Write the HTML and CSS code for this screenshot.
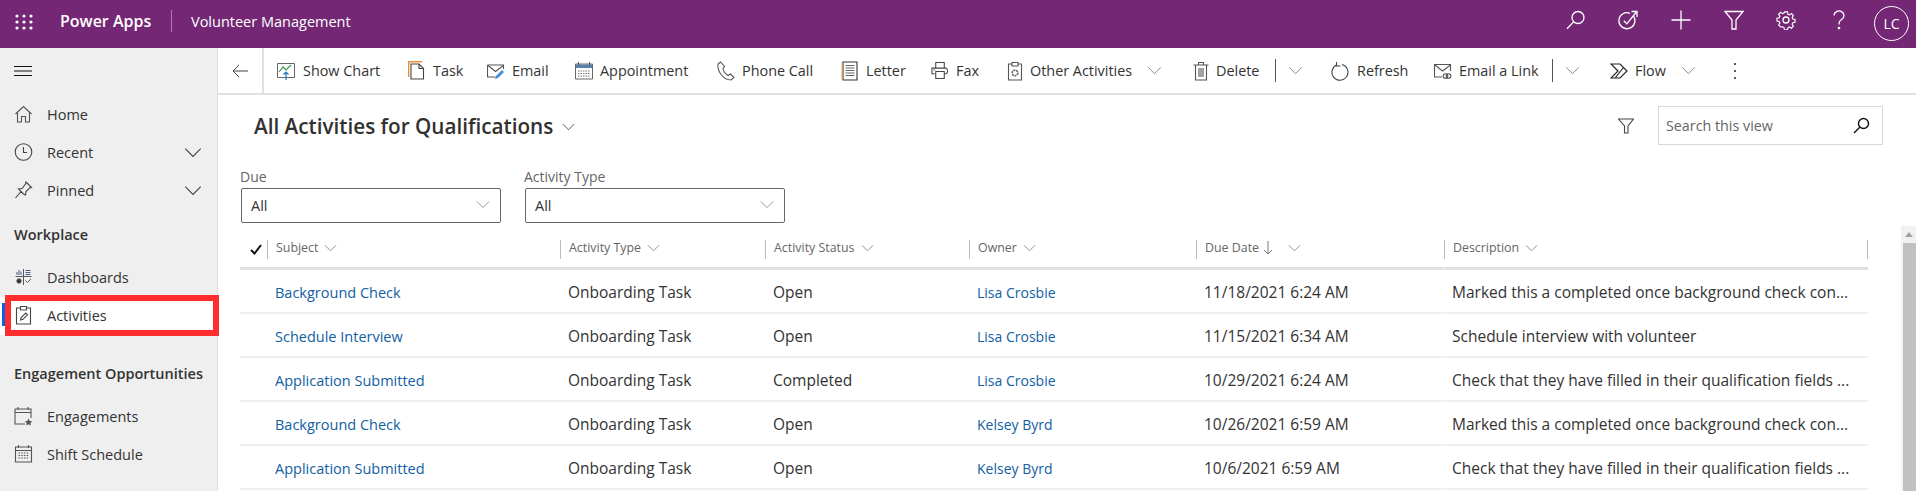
FILE: index.html
```html
<!DOCTYPE html>
<html lang="en">
<head>
    <meta charset="UTF-8">
    <meta name="viewport" content="width=device-width, initial-scale=1.0">
    <title>Volunteer Management</title>
    <link rel="stylesheet" href="styles.css">
</head>
<body>
    <svg class="defs" width="0" height="0">
        <symbol id="chev" viewBox="0 0 16 10"><path d="M1 1.5l7 7 7-7" fill="none" stroke="currentColor" stroke-width="1"/></symbol>
    </svg>

    <header class="topbar">
        <svg class="waffle" width="18" height="16" viewBox="0 0 18 16" fill="#fff">
            <circle cx="2" cy="2" r="1.6"/><circle cx="9" cy="2" r="1.6"/><circle cx="16" cy="2" r="1.6"/>
            <circle cx="2" cy="8" r="1.6"/><circle cx="9" cy="8" r="1.6"/><circle cx="16" cy="8" r="1.6"/>
            <circle cx="2" cy="14" r="1.6"/><circle cx="9" cy="14" r="1.6"/><circle cx="16" cy="14" r="1.6"/>
        </svg>
        <span class="brand">Power Apps</span>
        <span class="app-name">Volunteer Management</span>
        <div class="top-actions">
            <span class="top-btn"><svg width="20" height="20" viewBox="0 0 20 20" fill="none" stroke="#fff" stroke-width="1.3"><circle cx="12" cy="7.5" r="6"/><path d="M7.6 11.9L1 18.8"/></svg></span>
            <span class="top-btn"><svg width="20" height="20" viewBox="0 0 20 20" fill="none" stroke="#fff" stroke-width="1.3"><path d="M15 5.5a8 8 0 1 1-3-2.2"/><path d="M5.8 10.8l3 3L18 2.5M13.5 1.5H19V7"/></svg></span>
            <span class="top-btn"><svg width="20" height="20" viewBox="0 0 20 20" fill="none" stroke="#fff" stroke-width="1.3"><path d="M0.5 10h19M10 0.5v19"/></svg></span>
            <span class="top-btn"><svg width="20" height="20" viewBox="0 0 20 20" fill="none" stroke="#fff" stroke-width="1.3"><path d="M1 1.5h18l-7 8.5v9H8v-9z"/></svg></span>
            <span class="top-btn"><svg width="20" height="20" viewBox="0 0 20 20" fill="none" stroke="#fff" stroke-width="1.3"><circle cx="10" cy="10" r="3"/><path d="M8.3 1h3.4l.5 2.6 1.6.7 2.2-1.5 2.2 2.4-1.4 2.1.7 1.6 2.5.5v3.2l-2.5.5-.7 1.6 1.4 2.1-2.2 2.4-2.2-1.5-1.6.7-.5 2.5H8.3l-.5-2.5-1.6-.7L4 17.8l-2.2-2.4 1.4-2.1-.7-1.6L0 11.2V8l2.5-.5.7-1.6-1.4-2.1L4 1.4l2.2 1.5 1.6-.7z" transform="translate(1 1) scale(.9)"/></svg></span>
            <span class="top-btn"><svg width="20" height="20" viewBox="0 0 20 20" fill="none" stroke="#fff" stroke-width="1.3"><path d="M5 5.5a5 4.6 0 1 1 7.6 4c-1.7 1.1-2.6 2-2.6 4v1"/><circle cx="10" cy="18" r=".7" fill="#fff"/></svg></span>
        </div>
        <span class="avatar">LC</span>
    </header>

    <div class="shell">
        <nav class="sidebar">
            <div class="burger"><svg width="18" height="12" viewBox="0 0 18 12" stroke="#111" stroke-width="1"><path d="M0 1.5h18M0 6h18M0 10.5h18"/></svg></div>
            <ul class="nav-list first">
                <li class="nav-item"><svg width="18" height="18" viewBox="0 0 18 18" fill="none" stroke="#555" stroke-width="1.1"><path d="M1 9l8-7.5L17 9M3 7.5V17h4v-5.500h4V17h4V7.5"/></svg>Home</li>
                <li class="nav-item"><svg width="18" height="18" viewBox="0 0 18 18" fill="none" stroke="#444" stroke-width="1.1"><circle cx="9" cy="9" r="8.3"/><path d="M9 4v5.5h3.5"/></svg>Recent<svg class="nav-chev"><use href="#chev"/></svg></li>
                <li class="nav-item"><svg width="18" height="18" viewBox="0 0 18 18" fill="none" stroke="#444" stroke-width="1.1"><path d="M11.5 1l5.500 5.500-2 .5-3.500 3.500-.5 3.500-2-1-5-5 3.500-.5L11 3zM6.500 10.500L1 17"/></svg>Pinned<svg class="nav-chev"><use href="#chev"/></svg></li>
            </ul>
            <h2 class="nav-heading workplace">Workplace</h2>
            <ul class="nav-list">
                <li class="nav-item"><svg width="18" height="18" viewBox="0 0 18 18" fill="none" stroke="#555" stroke-width="1"><path d="M9 1v16M1 8.5h16"/><path d="M2.5 7V4M4.500 7V2M6.500 7V3.500M11 2.500h5M11 4.500h5M11 6.500h5" stroke="#4a5a80"/><circle cx="4.5" cy="13" r="2.2" fill="#333"/><path d="M11 12.5l2 2 3.500-3.500"/></svg>Dashboards</li>
                <li class="nav-item active"><svg width="18" height="20" viewBox="0 0 18 20" fill="none" stroke="#444" stroke-width="1.1"><path d="M5.5 3H2v16h14V3h-3.500"/><path d="M6 1.5h6V5H6z"/><path d="M6 15l.7-2.500 4.500-4.500 1.800 1.800-4.500 4.500z"/></svg>Activities</li>
            </ul>
            <h2 class="nav-heading engage">Engagement Opportunities</h2>
            <ul class="nav-list">
                <li class="nav-item"><svg width="19" height="20" viewBox="0 0 19 20" fill="none" stroke="#555" stroke-width="1.1"><path d="M1 3h16v9M1 3v15h10M1 6.5h16M4 1v3M14 1v3"/><path d="M14.5 12.5l1.200 2.400 2.600.3-1.900 1.800.5 2.500-2.400-1.200-2.300 1.200.5-2.500-1.900-1.800 2.500-.3z" fill="#555" stroke="none"/></svg>Engagements</li>
                <li class="nav-item"><svg width="18" height="20" viewBox="0 0 18 20" fill="none" stroke="#555" stroke-width="1.1"><path d="M1 3h16v15H1zM1 6.5h16M4 1v3M14 1v3"/><path d="M4 9h10M4 11.5h10M4 14h10" stroke-dasharray="1.5 1.2"/></svg>Shift Schedule</li>
            </ul>
        </nav>

        <main class="main">
            <div class="toolbar">
                <div class="back"><svg width="16" height="14" viewBox="0 0 16 14" fill="none" stroke="#444" stroke-width="1"><path d="M16 7H1M7 1L1 7l6 6"/></svg></div>
                <div class="cmd first-cmd wide"><svg width="18" height="18" viewBox="0 0 18 18" fill="none"><path d="M.5 1.5h17v14H.5z" stroke="#666"/><path d="M2 10l4-5 3 3 5-5" stroke="#3a9a50" stroke-width="1.2"/><path d="M9 18v-8M6.5 12.5L9 10l2.500 2.500" stroke="#1a78c2" stroke-width="1.2"/></svg>Show Chart</div>
                <div class="cmd"><svg width="18" height="20" viewBox="0 0 18 20" fill="none"><path d="M.7 16V.7h13.500" stroke="#e8903c" stroke-width="1.4"/><path d="M3 3h8l4.500 4.500V18H3zM11 3v4.500h4.500" stroke="#444" stroke-width="1.1" fill="#fff"/></svg>Task</div>
                <div class="cmd"><svg width="18" height="18" viewBox="0 0 18 18" fill="none"><path d="M.5 3h16v4M.5 3v12h8" stroke="#555" stroke-width="1.1"/><path d="M1 3.5l7.500 6 8-6" stroke="#555" stroke-width="1.1"/><path d="M8 17l1-3 6-6 2 2-6 6z" fill="#3d8fd6"/></svg>Email</div>
                <div class="cmd"><svg width="18" height="20" viewBox="0 0 18 20" fill="none"><path d="M.5 3h17v15H.5z" stroke="#666"/><path d="M1 3.5h16V7H1z" fill="#5a7fa8"/><path d="M3.5 1v3M14.5 1v3" stroke="#555"/><path d="M3 10h12M3 12.5h12M3 15h12" stroke="#777" stroke-dasharray="1.5 1"/></svg>Appointment</div>
                <div class="cmd"><svg width="18" height="20" viewBox="0 0 18 20" fill="none" stroke="#555" stroke-width="1.1"><path d="M3.5 1L1 3c-.5 4 1 8 3.500 11s6 5 9.500 5l3-2.500-3.500-3.500-2.500 1.500C8.500 13 6.500 10 6 7.500L7.500 5.500z"/></svg>Phone Call</div>
                <div class="cmd"><svg width="17" height="20" viewBox="0 0 17 20" fill="none"><path d="M1.5 1h14v18h-14z" stroke="#333" stroke-width="1.1"/><path d="M.5 1v18" stroke="#e8a860"/><path d="M4 4.5h9M4 7h9M4 9.5h9M4 12h9M4 14.500h9" stroke="#666" stroke-width="1.1"/></svg>Letter</div>
                <div class="cmd"><svg width="19" height="19" viewBox="0 0 19 19" fill="none" stroke="#444" stroke-width="1.1"><path d="M5 7V1h9v6M4 13H1V7h15c2 1 2 5 0 6h-2M5 10.5h9V18H5z"/><path d="M2.5 9h2" stroke="#2d86d0"/></svg>Fax</div>
                <div class="cmd narrow"><svg width="15" height="20" viewBox="0 0 15 20" fill="none" stroke="#555" stroke-width="1.1"><path d="M4 3H1v16h13V3h-3M4.5 1.500h6V5h-6z"/><circle cx="7.5" cy="12" r="2.8" stroke-width="1.5" stroke-dasharray="2 .8"/></svg>Other Activities<svg class="chev"><use href="#chev"/></svg></div>
                <div class="cmd narrow"><svg width="15" height="20" viewBox="0 0 15 20" fill="none" stroke="#555" stroke-width="1.1"><path d="M0 4h15M5 4V1.5h5V4M2 4v15h11V4M5.500 7v9M7.500 7v9M9.500 7v9"/></svg>Delete</div>
                <div class="split"><svg class="chev"><use href="#chev"/></svg></div>
                <div class="cmd wide"><svg width="18" height="22" viewBox="0 0 18 22" fill="none" stroke="#444" stroke-width="1.1"><path d="M11 3.500a8 8 0 1 1-5 .3M5.500 1v4h4" transform="translate(0 1)"/></svg>Refresh</div>
                <div class="cmd"><svg width="18" height="18" viewBox="0 0 18 18" fill="none" stroke="#555" stroke-width="1.1"><path d="M8 15H.5V2.500h16V9"/><path d="M1 3l7.500 6 8-6"/><circle cx="11.5" cy="14" r="2.3"/><circle cx="14.5" cy="14" r="2.3"/></svg>Email a Link</div>
                <div class="split"><svg class="chev"><use href="#chev"/></svg></div>
                <div class="cmd"><svg width="18" height="16" viewBox="0 0 18 16" fill="none" stroke="#222" stroke-width="1.2"><path d="M1 1h9l7 7-7 7H1l7-7zM5.500 14.500L13.500 4.500"/></svg>Flow<svg class="chev"><use href="#chev"/></svg></div>
                <div class="more"><svg width="4" height="18" viewBox="0 0 4 18" fill="#333"><circle cx="2" cy="2" r="1.1"/><circle cx="2" cy="9" r="1.1"/><circle cx="2" cy="16" r="1.1"/></svg></div>
            </div>

            <div class="view-head">
                <h1 class="view-title">All Activities for Qualifications<svg class="title-chev"><use href="#chev"/></svg></h1>
                <svg class="view-filter" width="16" height="16" viewBox="0 0 16 16" fill="none" stroke="#444" stroke-width="1.1"><path d="M.5 1h15L10 8v7H6.500V8z"/></svg>
                <div class="search">
                    <span>Search this view</span>
                    <svg width="17" height="17" viewBox="0 0 17 17" fill="none" stroke="#111" stroke-width="1.4"><circle cx="10.5" cy="6.5" r="5"/><path d="M6.800 10.200L1 16"/></svg>
                </div>
            </div>

            <div class="filters">
                <div class="filter">
                    <label>Due</label>
                    <div class="select">All<svg class="chev"><use href="#chev"/></svg></div>
                </div>
                <div class="filter">
                    <label>Activity Type</label>
                    <div class="select">All<svg class="chev"><use href="#chev"/></svg></div>
                </div>
            </div>

            <div class="grid-wrap">
                <table class="grid">
                    <colgroup>
                        <col class="c-check"><col class="c-subject"><col class="c-type"><col class="c-status"><col class="c-owner"><col class="c-due"><col class="c-desc">
                    </colgroup>
                    <thead>
                        <tr>
                            <th class="check-cell"><svg width="12" height="11" viewBox="0 0 12 11" fill="none" stroke="#111" stroke-width="2"><path d="M1 6l3.500 3.500L11 1"/></svg></th>
                            <th><div class="th-label">Subject<svg class="chev"><use href="#chev"/></svg></div></th>
                            <th><div class="th-label">Activity Type<svg class="chev"><use href="#chev"/></svg></div></th>
                            <th><div class="th-label">Activity Status<svg class="chev"><use href="#chev"/></svg></div></th>
                            <th><div class="th-label">Owner<svg class="chev"><use href="#chev"/></svg></div></th>
                            <th><div class="th-label">Due Date<svg class="sort" width="10" height="14" viewBox="0 0 10 14" fill="none" stroke="#777"><path d="M5 0v13M1 9l4 4 4-4"/></svg><svg class="chev sorted"><use href="#chev"/></svg></div></th>
                            <th class="last"><div class="th-label end">Description<svg class="chev"><use href="#chev"/></svg></div></th>
                        </tr>
                    </thead>
                    <tbody>
                        <tr>
                            <td></td><td><a class="link">Background Check</a></td><td>Onboarding Task</td><td>Open</td><td><a class="link owner">Lisa Crosbie</a></td><td>11/18/2021 6:24 AM</td>
                            <td class="last">Marked this a completed once background check con...</td>
                        </tr>
                        <tr>
                            <td></td><td><a class="link">Schedule Interview</a></td><td>Onboarding Task</td><td>Open</td><td><a class="link owner">Lisa Crosbie</a></td><td>11/15/2021 6:34 AM</td>
                            <td class="last">Schedule interview with volunteer</td>
                        </tr>
                        <tr>
                            <td></td><td><a class="link">Application Submitted</a></td><td>Onboarding Task</td><td>Completed</td><td><a class="link owner">Lisa Crosbie</a></td><td>10/29/2021 6:24 AM</td>
                            <td class="last">Check that they have filled in their qualification fields ...</td>
                        </tr>
                        <tr>
                            <td></td><td><a class="link">Background Check</a></td><td>Onboarding Task</td><td>Open</td><td><a class="link owner">Kelsey Byrd</a></td><td>10/26/2021 6:59 AM</td>
                            <td class="last">Marked this a completed once background check con...</td>
                        </tr>
                        <tr>
                            <td></td><td><a class="link">Application Submitted</a></td><td>Onboarding Task</td><td>Open</td><td><a class="link owner">Kelsey Byrd</a></td><td>10/6/2021 6:59 AM</td>
                            <td class="last">Check that they have filled in their qualification fields ...</td>
                        </tr>
                    </tbody>
                </table>
                <div class="scrollbar">
                    <span class="scroll-up"></span>
                    <span class="scroll-thumb"></span>
                </div>
            </div>
        </main>
    </div>

    <!-- red callout drawn over the screenshot -->
    <div class="callout"></div>
</body>
</html>
```

FILE: styles.css
```css
:root {
    --brand: #742774;
    --side-bg: #efefef;
    --text: #333333;
    --link: #115ea3;
    --line: #e1e1e1;
    --chev: #7a7a7a;
}

* {
    margin: 0;
    padding: 0;
    box-sizing: border-box;
}

html, body {
    height: 100%;
    overflow: hidden;
}

body {
    font-family: "Open Sans", "Noto Sans", sans-serif;
    font-size: 14px;
    color: var(--text);
    background: #fff;
    position: relative;
}

.defs {
    position: absolute;
}

/* top bar */
.topbar {
    height: 48px;
    background: var(--brand);
    color: #fff;
    display: flex;
    align-items: center;
    padding: 0 7px 6px 15px;
}

.waffle {
    margin-top: 2px;
}

.brand {
    margin-left: 27px;
    width: 112px;
    height: 22px;
    line-height: 22px;
    font-size: 16px;
    font-weight: 600;
    border-right: 1px solid rgba(255, 255, 255, 0.4);
}

.app-name {
    margin-left: 19px;
    font-size: 14.5px;
}

.top-actions {
    margin-left: auto;
    display: flex;
    margin-right: 9px;
}

.top-btn {
    width: 52.6px;
    display: flex;
    justify-content: center;
    margin-top: -3px;
}

.avatar {
    width: 35px;
    height: 35px;
    border: 1px solid #fff;
    border-radius: 50%;
    display: flex;
    align-items: center;
    justify-content: center;
    font-size: 14px;
    margin-top: 5px;
}

/* page body */
.shell {
    display: flex;
    height: calc(100% - 48px);
}

.sidebar {
    width: 218px;
    flex: none;
    background: var(--side-bg);
    border-right: 1px solid #dcdcdc;
    font-size: 14.5px;
}

.burger {
    height: 46px;
    padding-left: 14px;
    display: flex;
    align-items: center;
}

.nav-list {
    list-style: none;
}

.nav-list.first {
    padding-top: 2px;
}

.nav-item {
    height: 38px;
    padding: 0 0 2px 14px;
    display: flex;
    align-items: center;
    position: relative;
}

.nav-item > svg:first-child {
    width: 19px;
    margin-right: 14px;
    flex: none;
}

.nav-item.active {
    background: #fff;
}

.nav-item.active::before {
    content: "";
    position: absolute;
    left: 2px;
    top: 6px;
    width: 3px;
    height: 23px;
    background: #0f5fe0;
}

.nav-chev {
    width: 18px;
    height: 11px;
    margin-left: auto;
    margin-right: 15px;
    color: #444;
}

.nav-heading {
    height: 38px;
    line-height: 38px;
    padding-left: 14px;
    font-size: 14.5px;
    font-weight: 600;
}

.workplace {
    margin-top: 6px;
    margin-bottom: 5px;
}

.engage {
    margin-top: 20px;
    margin-bottom: 5px;
}

.main {
    flex: 1;
    min-width: 0;
}

/* command bar */
.toolbar {
    height: 47px;
    border-bottom: 2px solid var(--line);
    display: grid;
    grid-template-columns: 46px 144px 79px 88px 142px 124px 90px 75px 186px 83px 56px 103px 118px 58px 115px 1fr;
    align-items: center;
    font-size: 14.4px;
}

.back {
    height: 100%;
    border-right: 2px solid var(--line);
    display: flex;
    align-items: center;
    justify-content: center;
    padding-right: 1px;
}

.cmd {
    display: flex;
    align-items: center;
    white-space: nowrap;
}

.first-cmd {
    padding-left: 13px;
}

.cmd > svg:first-child {
    width: 18px;
    margin-right: 7px;
    flex: none;
}

.cmd.wide > svg:first-child {
    margin-right: 8px;
}

.cmd.narrow > svg:first-child {
    margin-right: 6px;
}

.chev {
    width: 15px;
    height: 9px;
    color: var(--chev);
    flex: none;
}

.cmd .chev {
    margin-left: 15px;
}

.split {
    height: 23px;
    border-left: 1px solid #555;
    padding-left: 12px;
    display: flex;
    align-items: center;
}

.more {
    padding-left: 8px;
    display: flex;
}

/* view header */
.view-head {
    height: 39px;
    margin-top: 11px;
    padding-left: 36px;
    padding-right: 33px;
    display: flex;
    align-items: center;
}

.view-title {
    font-size: 20.7px;
    font-weight: 600;
    color: #323130;
    display: flex;
    align-items: center;
}

.title-chev {
    width: 13px;
    height: 8px;
    margin-left: 9px;
    margin-top: 2px;
    color: #333;
}

.view-filter {
    margin-left: auto;
    margin-right: 24px;
}

.search {
    width: 225px;
    height: 39px;
    border: 1px solid #d8d8d8;
    padding: 0 12px 0 7px;
    display: flex;
    align-items: center;
    justify-content: space-between;
    font-size: 14.3px;
    color: #666;
}

/* filters */
.filters {
    margin-top: 22px;
    padding-left: 23px;
    display: flex;
    gap: 24px;
}

.filter {
    width: 260px;
}

.filter label {
    display: block;
    height: 21px;
    line-height: 20px;
    font-size: 14px;
    color: #666;
    margin-left: -1px;
}

.select {
    height: 35px;
    border: 1px solid #666;
    border-radius: 2px;
    padding: 0 10px 0 9px;
    display: flex;
    align-items: center;
    justify-content: space-between;
    font-size: 14.5px;
}

.select .chev {
    width: 14px;
    margin-top: -3px;
    color: #8a8a8a;
}

/* activities grid */
.grid-wrap {
    margin-top: 3px;
    padding-left: 22px;
    display: flex;
    justify-content: space-between;
    height: 265px;
}

.grid {
    width: 1628px;
    table-layout: fixed;
    border-collapse: separate;
    border-spacing: 0;
    margin-top: 14px;
    align-self: flex-start;
}

.c-check { width: 27px; }
.c-subject { width: 293px; }
.c-type { width: 205px; }
.c-status { width: 204px; }
.c-owner { width: 227px; }
.c-due { width: 247px; }
.c-desc { width: 425px; }

.grid th {
    height: 30px;
    padding-bottom: 8px;
    border-bottom: 3px solid var(--line);
    font-weight: 400;
    text-align: left;
    vertical-align: top;
}

.check-cell svg {
    margin: 2px 0 0 10px;
}

.th-label {
    height: 19px;
    line-height: 16px;
    padding-left: 8px;
    border-left: 1px solid #bdbdbd;
    font-size: 12.4px;
    color: #666;
    display: flex;
    align-items: flex-start;
}

.th-label.end {
    border-right: 1px solid #bdbdbd;
}

.th-label .chev {
    margin-left: 6px;
    margin-top: 4px;
    width: 13px;
    height: 8px;
}

.th-label .sort {
    margin-left: 4px;
    margin-top: 1px;
}

.th-label .sorted {
    margin-left: 15px;
}

.grid td {
    height: 44px;
    padding: 2px 0 0 8px;
    border-bottom: 2px solid #efefef;
    font-size: 15.5px;
    white-space: nowrap;
    overflow: hidden;
    color: #333;
}

.grid .last {
    border-left: 1px solid #fff;
}

.link {
    color: var(--link);
    font-size: 14.5px;
}

.link.owner {
    font-size: 14px;
}

/* scrollbar */
.scrollbar {
    width: 15px;
    height: 100%;
    background: #f1f1f1;
    display: flex;
    flex-direction: column;
    align-items: flex-end;
}

.scroll-up {
    width: 0;
    height: 0;
    margin: 6px 3px 6px 0;
    border-left: 4px solid transparent;
    border-right: 4px solid transparent;
    border-bottom: 5px solid #a3a3a3;
}

.scroll-thumb {
    width: 13.5px;
    flex: 1;
    background: #c1c1c1;
}

/* red annotation over the active nav item */
.callout {
    position: absolute;
    left: 5px;
    top: 295px;
    width: 214px;
    height: 41px;
    border: 6px solid #ff2d2d;
}
```
